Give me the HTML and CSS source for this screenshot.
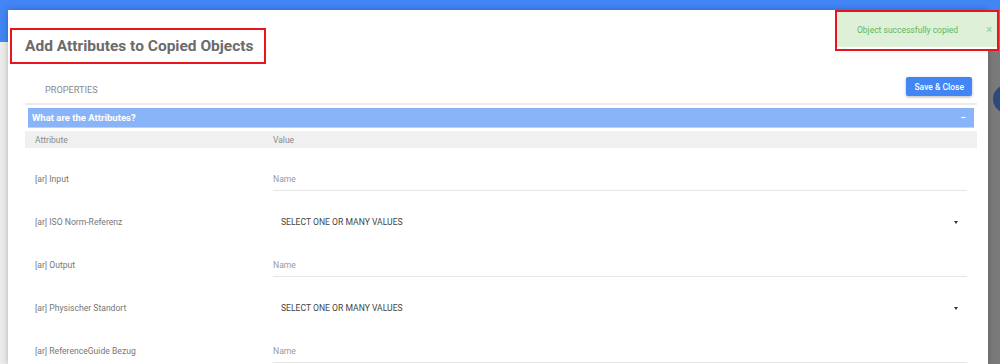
FILE: index.html
```html
<!DOCTYPE html>
<html lang="en">
<head>
    <meta charset="UTF-8">
    <title>Add Attributes to Copied Objects</title>
    <link rel="stylesheet" href="styles.css">
</head>
<body>
    <div class="topbar"></div>
    <div class="backdrop">
        <div class="scrim"><span class="fab"></span></div>
    </div>

    <div class="modal">
        <h2 class="modal-title">Add Attributes to Copied Objects</h2>

        <div class="tabs">
            <span class="tab">PROPERTIES</span>
            <button class="btn-save">Save &amp; Close</button>
        </div>

        <div class="section-head">
            <span>What are the Attributes?</span>
            <span class="collapse">&minus;</span>
        </div>

        <div class="table-head">
            <span>Attribute</span>
            <span>Value</span>
        </div>

        <div class="row row-first">
            <span class="label">[ar] Input</span>
            <div class="field"><span class="placeholder">Name</span></div>
        </div>
        <div class="row row-select">
            <span class="label">[ar] ISO Norm-Referenz</span>
            <div class="select"><span>SELECT ONE OR MANY VALUES</span><span class="caret"></span></div>
        </div>
        <div class="row">
            <span class="label">[ar] Output</span>
            <div class="field"><span class="placeholder">Name</span></div>
        </div>
        <div class="row row-select">
            <span class="label">[ar] Physischer Standort</span>
            <div class="select"><span>SELECT ONE OR MANY VALUES</span><span class="caret"></span></div>
        </div>
        <div class="row">
            <span class="label">[ar] ReferenceGuide Bezug</span>
            <div class="field"><span class="placeholder">Name</span></div>
        </div>
    </div>

    <div class="toast-mark">
        <div class="toast">
            <span>Object successfully copied</span>
            <span class="toast-close">&times;</span>
        </div>
    </div>
</body>
</html>
```

FILE: styles.css
```css
body {
    margin: 0;
    padding: 0;
    font-family: Roboto, "Liberation Sans", Arial, sans-serif;
    background-color: #ebebeb;
    height: 364px;
    overflow: hidden;
}
.topbar {
    height: 42px;
    background-color: #4285f4;
}
.backdrop {
    display: flex;
    justify-content: flex-end;
    height: 322px;
}
.scrim {
    position: relative;
    width: 12px;
    background-color: #7a7a7a;
    border-top: 1px solid #8a8a8a;
}
.fab {
    position: absolute;
    left: 5px;
    top: 42px;
    width: 28px;
    height: 28px;
    border-radius: 50%;
    background-color: #2c4a7c;
}
.modal {
    position: absolute;
    left: 8px;
    top: 10px;
    width: 952px;
    bottom: 0;
    padding: 18px 11px 0 17px;
    background-color: #fff;
    box-shadow: 0 0 6px rgba(0, 0, 0, 0.25);
}
.modal-title {
    display: inline-block;
    margin: 0 0 0 -15px;
    padding: 7px 10px 7px 13px;
    border: 2px solid #e8151f;
    font-size: 15.5px;
    font-weight: 700;
    color: #6b6b6b;
    line-height: 18px;
}
.tabs {
    display: flex;
    justify-content: space-between;
    align-items: flex-start;
    margin-top: 13px;
    height: 26px;
    padding: 0 5px 0 20px;
    border-bottom: 2px solid #ececec;
}
.tab {
    font-size: 9.2px;
    line-height: 12px;
    color: #8a8a8a;
    padding-top: 7px;
}
.btn-save {
    background-color: #4285f4;
    color: #fff;
    border: none;
    border-radius: 2px;
    height: 19px;
    padding: 0 8px;
    font-family: inherit;
    font-size: 8.5px;
    font-weight: 500;
    box-shadow: 0 1px 3px rgba(0, 0, 0, 0.3);
}
.section-head {
    display: flex;
    justify-content: space-between;
    align-items: center;
    margin: 3px 3px 0 3px;
    height: 19px;
    padding: 0 8px 0 4px;
    background-color: #8ab4f8;
    border-bottom: 1px solid #b9d2fb;
    color: #fff;
    font-size: 9.5px;
    font-weight: 700;
}
.collapse {
    font-size: 10px;
}
.table-head {
    display: grid;
    grid-template-columns: 248px 1fr;
    align-items: center;
    margin-top: 3px;
    height: 17px;
    padding-left: 10px;
    background-color: #f0f0f0;
    font-size: 8.5px;
    color: #8a8a8a;
}
.table-head span:last-child {
    margin-left: -10px;
}
.row {
    display: grid;
    grid-template-columns: 248px 1fr;
    align-items: center;
    height: 44px;
}
.row-first {
    margin-top: 9px;
}
.row-select {
    height: 42px;
}
.label {
    padding-left: 10px;
    font-size: 8.6px;
    color: #777;
}
.field {
    display: flex;
    align-items: center;
    margin-right: 10px;
    height: 22px;
    border-bottom: 1px solid #e6e6e6;
}
.placeholder {
    font-size: 8.6px;
    color: #9a9a9a;
}
.select {
    display: flex;
    justify-content: space-between;
    align-items: center;
    padding: 0 19px 0 8px;
    font-size: 8.6px;
    color: #444;
}
.caret {
    width: 0;
    height: 0;
    border-left: 2.5px solid transparent;
    border-right: 2.5px solid transparent;
    border-top: 3px solid #333;
}
.toast-mark {
    position: absolute;
    left: 835px;
    top: 10px;
    width: 160px;
    height: 36px;
    padding-bottom: 1px;
    background-color: #fff;
    border: 2px solid #e8151f;
}
.toast {
    display: flex;
    justify-content: space-between;
    align-items: center;
    height: 35px;
    padding: 0 5px 0 20px;
    background-color: #dff0d8;
    color: #5cb85c;
    font-size: 8.5px;
}
.toast-close {
    color: #8fcb8f;
    font-size: 11px;
}
```
